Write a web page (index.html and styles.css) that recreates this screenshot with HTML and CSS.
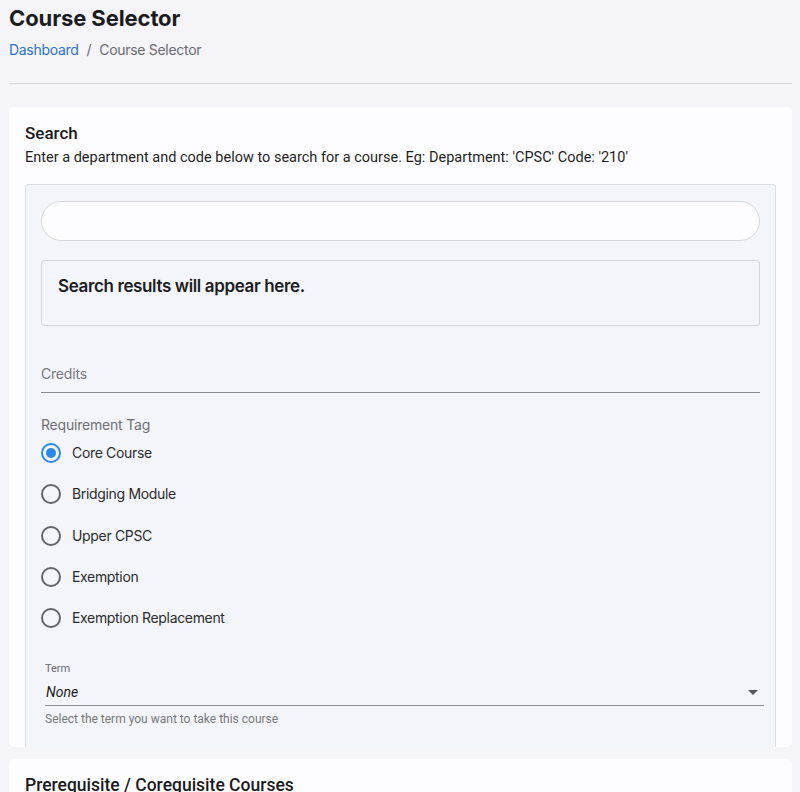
FILE: index.html
```html
<!DOCTYPE html>
<html>
<head>
<meta charset="utf-8">
<link rel="stylesheet" href="styles.css">
</head>
<body>
<div class="page">
  <h1 class="title">Course Selector</h1>
  <nav class="crumbs"><a class="crumb-link">Dashboard</a><span class="sep">/</span><span class="crumb-cur">Course Selector</span></nav>
  <div class="rule"></div>

  <section class="card card-search">
    <h2 class="card-title">Search</h2>
    <p class="card-desc">Enter a department and code below to search for a course. Eg: Department: 'CPSC' Code: '210'</p>
    <div class="panel">
      <div class="search-input"></div>
      <div class="results">Search results will appear here.</div>
      <div class="credits"><span class="credits-label">Credits</span></div>
      <div class="req-label">Requirement Tag</div>
      <div class="radios">
        <div class="radio-row"><span class="radio checked"></span><span class="radio-text">Core Course</span></div>
        <div class="radio-row"><span class="radio"></span><span class="radio-text">Bridging Module</span></div>
        <div class="radio-row"><span class="radio"></span><span class="radio-text">Upper CPSC</span></div>
        <div class="radio-row"><span class="radio"></span><span class="radio-text">Exemption</span></div>
        <div class="radio-row"><span class="radio"></span><span class="radio-text">Exemption Replacement</span></div>
      </div>
      <div class="term">
        <div class="term-label">Term</div>
        <div class="term-select"><span class="term-value">None</span><span class="caret"></span></div>
        <div class="term-help">Select the term you want to take this course</div>
      </div>
    </div>
  </section>

  <section class="card card-prereq">
    <h2 class="card-title card-title-wide">Prerequisite / Corequisite Courses</h2>
  </section>
</div>
</body>
</html>
```

FILE: styles.css
```css
html, body {
  margin: 0;
  padding: 0;
  background: #f4f4f9;
  height: 792px;
  overflow: hidden;
}
.page {
  padding: 0 8px 0 9px;
  font-family: Inter, "Liberation Sans", sans-serif;
}
.title {
  margin: 4px 0 0;
  font-size: 22px;
  line-height: 28px;
  font-weight: 700;
  color: #1c1c1f;
  letter-spacing: -0.1px;
}
.crumbs {
  margin-top: 8px;
  font-size: 14px;
  line-height: 20px;
  color: #6b6b70;
  letter-spacing: -0.3px;
}
.crumb-link { color: #2d72c6; }
.sep { margin: 0 8px; }
.rule {
  margin-top: 23px;
  height: 1px;
  background: #d6d6db;
}
.card {
  background: #fdfcff;
  border-radius: 5px;
  padding: 16px 16px 0;
  box-sizing: border-box;
}
.card-search {
  margin-top: 23px;
  height: 640px;
  overflow: hidden;
}
.card-prereq {
  margin-top: 12px;
  height: 60px;
}
.card-title {
  margin: 0;
  font-family: Roboto, "Liberation Sans", sans-serif;
  font-size: 17px;
  line-height: 20px;
  font-weight: 500;
  color: #1a1a1c;
}
.card-title-wide {
  font-size: 17.5px;
}
.card-desc {
  margin: 5px 0 0;
  font-family: Roboto, "Liberation Sans", sans-serif;
  font-size: 14.5px;
  line-height: 20px;
  color: #1f1f22;
}
.panel {
  margin-top: 16px;
  background: #f3f5fa;
  border: 1px solid #dcdde2;
  border-radius: 3px;
  padding: 16px 15px 40px;
}
.search-input {
  height: 38px;
  border: 1px solid #d6d7dc;
  border-radius: 20px;
  background: #fdfcff;
}
.results {
  margin-top: 19px;
  border: 1px solid #d4d5da;
  border-radius: 3px;
  padding: 15px 16px 29px;
  font-size: 17px;
  line-height: 20px;
  font-weight: 600;
  color: #1c1c1f;
  letter-spacing: -0.37px;
}
.credits {
  margin-top: 35px;
  height: 29px;
  border-bottom: 1px solid #8a8a8e;
  padding-top: 2px;
  box-sizing: content-box;
}
.credits-label {
  font-size: 14px;
  line-height: 20px;
  color: #77777c;
  letter-spacing: -0.2px;
}
.req-label {
  margin-top: 23px;
  font-size: 14px;
  line-height: 18px;
  color: #6f6f74;
  letter-spacing: -0.2px;
}
.radios {
  margin-top: -1.6px;
  display: flex;
  flex-direction: column;
}
.radio-row {
  height: 41.3px;
  display: flex;
  align-items: center;
  gap: 11px;
}
.radio {
  width: 16px;
  height: 16px;
  border: 2px solid #636368;
  border-radius: 50%;
  position: relative;
  flex: none;
}
.radio.checked {
  border-color: #2b86ea;
}
.radio.checked::after {
  content: "";
  position: absolute;
  left: 3px;
  top: 3px;
  width: 10px;
  height: 10px;
  border-radius: 50%;
  background: #2b86ea;
}
.radio-text {
  font-size: 14px;
  line-height: 20px;
  color: #2b2b2e;
  letter-spacing: -0.33px;
}
.term {
  margin: 23px -4px 0 4px;
  font-family: Roboto, "Liberation Sans", sans-serif;
}
.term-label {
  font-size: 11px;
  line-height: 14px;
  color: #6a6a6e;
}
.term-select {
  margin-top: 6px;
  height: 23px;
  border-bottom: 1px solid #8d8d92;
  display: flex;
  align-items: flex-start;
  justify-content: space-between;
  padding-right: 6px;
}
.term-value {
  font-size: 14px;
  line-height: 20px;
  font-style: italic;
  color: #1c1c1f;
  padding-left: 1px;
}
.caret {
  margin-top: 8px;
  width: 0;
  height: 0;
  border-left: 5px solid transparent;
  border-right: 5px solid transparent;
  border-top: 5px solid #555559;
}
.term-help {
  margin-top: 5px;
  font-size: 12px;
  line-height: 16px;
  color: #77777b;
}
```
